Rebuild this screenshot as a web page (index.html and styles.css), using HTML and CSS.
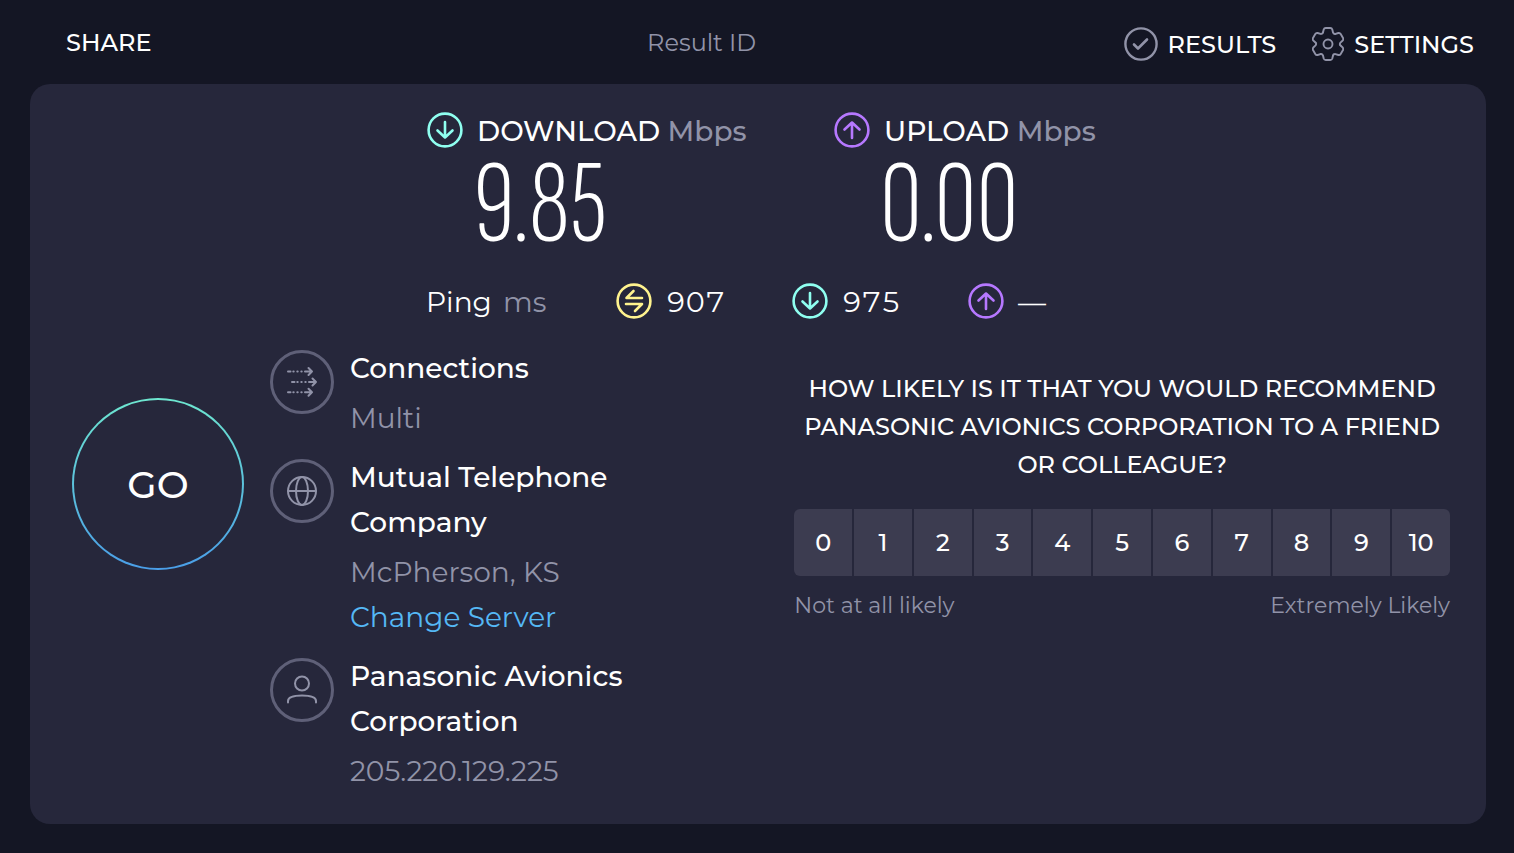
FILE: index.html
```html
<!DOCTYPE html>
<html lang="en">
<head>
    <meta charset="UTF-8">
    <meta name="viewport" content="width=device-width, initial-scale=1.0">
    <title>Speed Test</title>
    <link rel="stylesheet" href="styles.css">
</head>
<body>
    <svg class="sprite" aria-hidden="true">
        <symbol id="icon-down" viewBox="0 0 36 36">
            <circle cx="18" cy="18" r="16.4" stroke-width="2.6"/>
            <path d="M18 10v15M10.5 18.5L18 25.5L25.5 18.5" stroke-width="2.6"/>
        </symbol>
        <symbol id="icon-up" viewBox="0 0 36 36">
            <circle cx="18" cy="18" r="16.4" stroke-width="2.6"/>
            <path d="M18 26V10.5M10.5 17.5L18 10.5L25.5 17.5" stroke-width="2.6"/>
        </symbol>
        <symbol id="icon-ping" viewBox="0 0 36 36">
            <circle cx="18" cy="18" r="16.4" stroke-width="2.6"/>
            <path d="M26 15H10.5L17.5 8M10 21H26L19 28" stroke-width="2.6"/>
        </symbol>
    </svg>

    <header class="header">
        <a class="share" href="#">SHARE</a>
        <span class="result-id">Result ID</span>
        <nav class="nav">
            <a href="#">
                <svg width="34" height="34" viewBox="0 0 34 34">
                    <circle cx="17" cy="17" r="15.6" stroke-width="2.4"/>
                    <path d="M10 17.5L14 21.5L23 12.5" stroke-width="2.6"/>
                </svg>
                RESULTS
            </a>
            <a href="#">
                <svg width="32" height="34" viewBox="-16 -17 32 34">
                    <path id="tooth" d="M-5 -11.5L-4.3 -14.5Q-3.8 -16 -2.3 -16H2.3Q3.8 -16 4.3 -14.5L5 -11.5Q6 -9.5 7.5 -10.1" stroke-width="1.9"/>
                    <use href="#tooth" transform="rotate(60)"/>
                    <use href="#tooth" transform="rotate(120)"/>
                    <use href="#tooth" transform="rotate(180)"/>
                    <use href="#tooth" transform="rotate(240)"/>
                    <use href="#tooth" transform="rotate(300)"/>
                    <circle r="4.5" stroke-width="1.9"/>
                </svg>
                SETTINGS
            </a>
        </nav>
    </header>

    <main class="card">
        <section class="speeds">
            <div class="speed">
                <svg class="round download"><use href="#icon-down"/></svg>
                <h2>DOWNLOAD <span>Mbps</span></h2>
                <div class="number">9.85</div>
            </div>
            <div class="speed">
                <svg class="round upload"><use href="#icon-up"/></svg>
                <h2>UPLOAD <span>Mbps</span></h2>
                <div class="number">0.00</div>
            </div>
        </section>

        <section class="pings">
            <div class="ping-label">Ping <span>ms</span></div>
            <div class="ping"><svg class="round idle"><use href="#icon-ping"/></svg>907</div>
            <div class="ping"><svg class="round download"><use href="#icon-down"/></svg>975</div>
            <div class="ping"><svg class="round upload"><use href="#icon-up"/></svg>—</div>
        </section>

        <section class="details">
            <button class="go" type="button">GO</button>

            <div class="info">
                <div class="item">
                    <svg class="item-icon" viewBox="0 0 64 64">
                        <circle class="ring" cx="32" cy="32" r="30.5"/>
                        <path d="M18 21.5H20.5M23.3 21.5h.4M27.3 21.5h.4M31.3 21.5h.4M35 21.5H42M38.5 18L42 21.5L38.5 25"/>
                        <path d="M22 32H24.5M27.3 32h.4M31.3 32h.4M35.3 32h.4M39 32H46M42.5 28.5L46 32L42.5 35.5"/>
                        <path d="M18 42.3H20.5M23.3 42.3h.4M27.3 42.3h.4M31.3 42.3h.4M35 42.3H42M38.5 38.8L42 42.3L38.5 45.8"/>
                    </svg>
                    <div>
                        <h3>Connections</h3>
                        <p>Multi</p>
                    </div>
                </div>
                <div class="item">
                    <svg class="item-icon" viewBox="0 0 64 64">
                        <circle class="ring" cx="32" cy="32" r="30.5"/>
                        <circle cx="32" cy="32" r="14"/>
                        <ellipse cx="32" cy="32" rx="6" ry="14"/>
                        <path d="M18 32H46"/>
                    </svg>
                    <div>
                        <h3>Mutual Telephone Company</h3>
                        <p>McPherson, KS</p>
                        <a href="#">Change Server</a>
                    </div>
                </div>
                <div class="item">
                    <svg class="item-icon" viewBox="0 0 64 64">
                        <circle class="ring" cx="32" cy="32" r="30.5"/>
                        <circle cx="32" cy="25.5" r="7"/>
                        <path d="M18 44.5V43C18 39 23 37.5 32 37.5S46 39 46 43V44.5"/>
                    </svg>
                    <div>
                        <h3>Panasonic Avionics Corporation</h3>
                        <p>205.220.129.225</p>
                    </div>
                </div>
            </div>

            <div class="survey">
                <h4>HOW LIKELY IS IT THAT YOU WOULD RECOMMEND PANASONIC AVIONICS CORPORATION TO A FRIEND OR COLLEAGUE?</h4>
                <div class="scale">
                    <button type="button">0</button>
                    <button type="button">1</button>
                    <button type="button">2</button>
                    <button type="button">3</button>
                    <button type="button">4</button>
                    <button type="button">5</button>
                    <button type="button">6</button>
                    <button type="button">7</button>
                    <button type="button">8</button>
                    <button type="button">9</button>
                    <button type="button">10</button>
                </div>
                <div class="scale-labels">
                    <span>Not at all likely</span>
                    <span>Extremely Likely</span>
                </div>
            </div>
        </section>
    </main>
</body>
</html>
```

FILE: styles.css
```css
* {
    box-sizing: border-box;
}

body {
    margin: 0;
    padding: 0 28px 29px 30px;
    background-color: #141624;
    color: #ffffff;
    font-family: Montserrat, Inter, sans-serif;
    font-weight: 500;
}

h2, h3, h4, p {
    margin: 0;
    font-weight: 500;
}

a {
    color: #ffffff;
    text-decoration: none;
}

button {
    border: 0;
    padding: 0;
    color: #ffffff;
    font-family: inherit;
    font-weight: 500;
    cursor: pointer;
}

svg {
    fill: none;
    stroke-linecap: round;
    stroke-linejoin: round;
    flex-shrink: 0;
}

.sprite {
    position: absolute;
    width: 0;
    height: 0;
}

.header {
    display: grid;
    grid-template-columns: 17fr auto 21fr;
    align-items: center;
    height: 84px;
    padding: 0 12px 0 36px;
    font-size: 24px;
}

.result-id {
    color: #9193a8;
    font-weight: 400;
}

.nav {
    display: flex;
    justify-content: flex-end;
    gap: 36px;
    padding-top: 4px;
}

.nav a {
    display: flex;
    align-items: center;
    gap: 10px;
}

.nav svg {
    stroke: #9193a8;
}

.card {
    padding: 28px 36px 30px 42px;
    border-radius: 20px;
    background-color: #26273b;
}

.speeds {
    display: grid;
    grid-template-columns: 407px auto;
    justify-content: start;
    padding-left: 355px;
}

.speed {
    display: grid;
    grid-template-columns: 36px auto;
    justify-content: start;
    column-gap: 14px;
}

.speed h2 {
    font-size: 28px;
    line-height: 38px;
}

.speed span,
.ping-label span {
    color: #9193a8;
}

.number {
    grid-column: 2;
    height: 106px;
    margin-left: -4px;
    font-family: "Sofia Sans Extra Condensed", "Roboto Condensed", "Liberation Sans Narrow", sans-serif;
    font-size: 118px;
    font-weight: 300;
    line-height: 112px;
}

.round {
    width: 36px;
    height: 36px;
}

.idle {
    stroke: #fff38e;
}

.download {
    stroke: #8ffff0;
}

.upload {
    stroke: #b678ff;
}

.pings {
    display: flex;
    padding: 27px 0 0 354px;
    font-size: 28px;
    font-variant-numeric: tabular-nums;
    font-weight: 400;
    line-height: 38px;
}

.ping-label {
    width: 190px;
}

.ping-label span {
    margin-left: 4px;
}

.ping {
    display: flex;
    gap: 14px;
    width: 176px;
}

.details {
    display: grid;
    grid-template-columns: 172px 38fr 50fr;
    column-gap: 26px;
    align-items: start;
    padding-top: 25px;
}

.go {
    width: 172px;
    height: 172px;
    margin-top: 52px;
    border: 2px solid transparent;
    border-radius: 50%;
    background: linear-gradient(#26273b, #26273b) padding-box, linear-gradient(#6ee7d0, #4a9ee8) border-box;
    font-size: 38px;
}

.info {
    display: flex;
    flex-direction: column;
    gap: 14px;
    font-size: 28px;
    line-height: 45px;
}

.item {
    display: flex;
    gap: 16px;
    max-width: 380px;
}

.item-icon {
    width: 64px;
    height: 64px;
    margin-top: 4px;
    stroke: #9193a8;
    stroke-width: 2;
}

.ring {
    stroke: #5f6078;
    stroke-width: 3;
}

.item h3 {
    margin-bottom: 5px;
    font-size: 28px;
}

.item p {
    color: #9193a8;
    font-weight: 400;
}

.item a {
    color: #55b8f5;
    font-weight: 400;
}

.survey {
    padding-top: 24px;
}

.survey h4 {
    font-size: 24px;
    line-height: 38px;
    text-align: center;
}

.scale {
    display: grid;
    grid-template-columns: repeat(11, 1fr);
    gap: 2px;
    margin-top: 25px;
    overflow: hidden;
    border-radius: 6px;
}

.scale button {
    height: 67px;
    background-color: #3c3c50;
    font-size: 24px;
}

.scale-labels {
    display: flex;
    justify-content: space-between;
    padding-top: 14px;
    color: #9193a8;
    font-size: 22px;
    font-weight: 400;
    line-height: 32px;
}
```
